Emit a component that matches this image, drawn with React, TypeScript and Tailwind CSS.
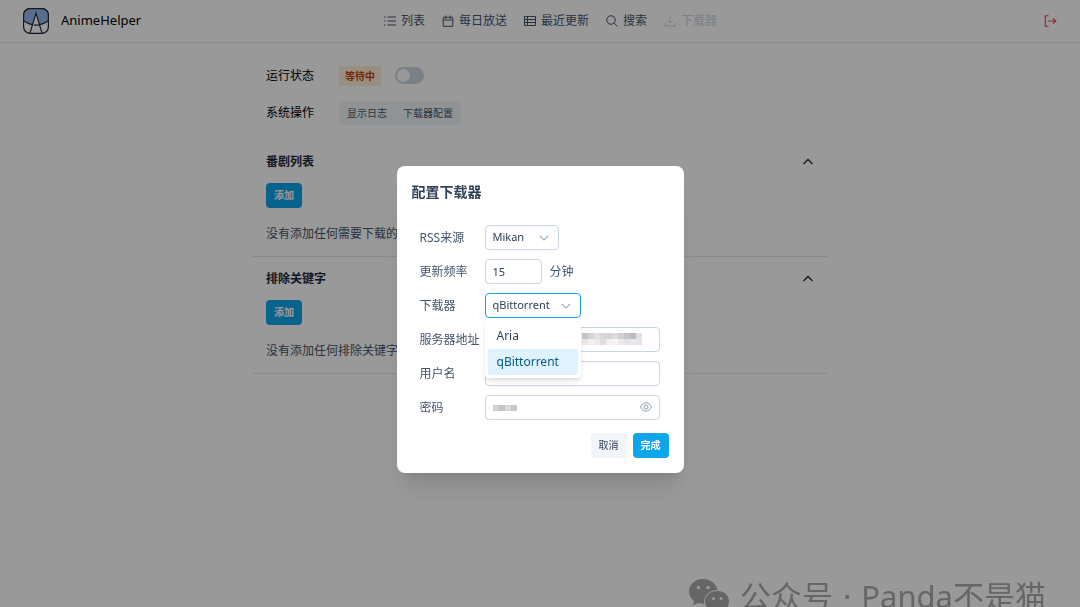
import { useState, type ReactNode } from "react"
import clsx from "clsx"

const IconBase = ({ children, className = "size-3" }: { children: ReactNode, className?: string }) => (
    <svg viewBox="0 0 24 24" fill="none" stroke="currentColor" strokeWidth="2" className={clsx("shrink-0", className)} aria-hidden="true">
        {children}
    </svg>
)

const ListIcon = () => (
    <IconBase>
        <path d="M7 4h17M7 12h17M7 20h17M0 4h3M0 12h3M0 20h3" />
    </IconBase>
)

const CalendarIcon = () => (
    <IconBase>
        <path d="M2.5 4.5h19v18h-19zM2.5 10h19M7.5 1v6.500M16.500 1v6.500" />
    </IconBase>
)

const TableIcon = () => (
    <IconBase>
        <path d="M1 3h22v18H1zM7 3v18M1 9h22M1 15h22" />
    </IconBase>
)

const SearchIcon = () => (
    <IconBase>
        <circle cx="10" cy="10" r="8.500" />
        <path d="M16.500 16.500l6.500 6.500" />
    </IconBase>
)

const DownloadIcon = () => (
    <IconBase>
        <path d="M12 1v15M6.500 10.500L12 16l5.500-5.500M1.500 15v7h21v-7" />
    </IconBase>
)

const LogoutIcon = () => (
    <IconBase className="size-3.5">
        <path d="M9.500 3H4v18h5.500M8.500 12H22M17 7.500l5 4.500-5 4.500" />
    </IconBase>
)

const ChevronIcon = ({ up = false, className }: { up?: boolean, className?: string }) => (
    <IconBase className={className}>
        <path d={up ? "M3 16l9-9 9 9" : "M2 7l10 10L22 7"} strokeWidth="2.500" />
    </IconBase>
)

const EyeIcon = () => (
    <IconBase>
        <path d="M1 12c5-11 17-11 22 0-5 11-17 11-22 0z" />
        <circle cx="12" cy="12" r="4" />
    </IconBase>
)

const Logo = () => (
    <svg viewBox="0 0 26 26" className="size-[26px]" fill="none" stroke="#1e293b" strokeWidth="1.200" aria-hidden="true">
        <rect x="0.600" y="0.600" width="24.800" height="24.800" rx="6.500" fill="#fff" />
        <path d="M0.600 12.500V7A6.400 6.400 0 0 1 7 0.600h12A6.400 6.400 0 0 1 25.400 7v5.500Q20 17 13 17T0.600 12.500z" fill="#93b8ea" />
        <path d="M7.500 25L13 5l5.500 20L16 17h-5z" fill="#fff" stroke="none" />
        <path d="M7 25.200L13 5l6 20.200M11 17h5" />
    </svg>
)

const navItems = [
    { label: "列表", icon: <ListIcon /> },
    { label: "每日放送", icon: <CalendarIcon /> },
    { label: "最近更新", icon: <TableIcon /> },
    { label: "搜索", icon: <SearchIcon /> },
    { label: "下载器", icon: <DownloadIcon />, current: true },
]

const Header = () => (
    <header className="flex h-[43px] items-center border-b border-slate-200 px-[23px]">
        <div className="flex w-[361px] shrink-0 items-center gap-3">
            <Logo />
            <span className="text-[13px] text-black">AnimeHelper</span>
        </div>
        <nav className="flex gap-[17px] text-xs text-slate-600">
            {navItems.map(item => (
                <a key={item.label} href="#" className={clsx("flex items-center gap-[5px]", item.current && "text-slate-300")}>
                    {item.icon}
                    {item.label}
                </a>
            ))}
        </nav>
        <button type="button" aria-label="退出" className="ml-auto text-[#ef4444]">
            <LogoutIcon />
        </button>
    </header>
)

const primaryButton = "h-[25px] w-9 rounded bg-[#0ea5e9] text-[10px] font-bold text-white"

const Section = ({ title, empty }: { title: string, empty: string }) => (
    <section className="border-b border-slate-200 px-3.5 py-3">
        <div className="flex h-5 items-center justify-between text-slate-800">
            <h2 className="text-xs font-bold">{title}</h2>
            <button type="button" aria-label="收起">
                <ChevronIcon up />
            </button>
        </div>
        <button type="button" className={clsx(primaryButton, "mt-[11px] block")}>添加</button>
        <p className="mt-4 text-xs leading-5 text-slate-600">{empty}</p>
    </section>
)

// masked value shown over a field
const Mask = ({ cells, className }: { cells: string[], className: string }) => (
    <span className={clsx("absolute grid", className)} aria-hidden="true">
        {cells.map((c, i) => <i key={i} className={clsx("size-1.5", c)} />)}
    </span>
)

const addressCells = [
    "bg-[#c4c4c6]", "bg-[#d4d4d6]", "bg-[#e2e2e4]", "bg-[#d8d8da]", "bg-[#d4d4d6]", "bg-[#dcdcde]", "bg-[#d0d0d2]", "bg-[#c4c4c8]", "bg-[#bcbcc0]", "bg-[#e2e2e4]",
    "bg-[#e8e8ea]", "bg-[#f2f2f2]", "bg-[#eaeaea]", "bg-[#dededf]", "bg-[#f0f0f0]", "bg-[#f4f4f4]", "bg-[#eaeaec]", "bg-[#e2e2e4]", "bg-[#eaeaec]", "bg-[#e6e6e8]",
]
const passwordCells = ["bg-[#d0d0d0]", "bg-[#c4c4c4]", "bg-[#d8d8d8]", "bg-[#c8c8c8]"]

const fieldBase = "h-[25px] rounded border bg-white px-[7px] text-[11px] text-slate-700 outline-none"
const field = `${fieldBase} border-slate-300`

const Row = ({ id, label, children }: { id: string, label: string, children: ReactNode }) => (
    <div className="flex items-center">
        <label htmlFor={id} className="w-[65px] shrink-0 text-xs">{label}</label>
        {children}
    </div>
)

const DownloaderModal = () => {
    const [downloader, setDownloader] = useState("qBittorrent")
    const [open, setOpen] = useState(true)

    return (
        <form role="dialog" aria-labelledby="title" className="w-[287px] rounded-lg bg-white px-[15px] pt-3.5 pb-[15px] text-slate-600 shadow-xl">
            <h1 id="title" className="text-sm leading-6 font-bold text-slate-700">配置下载器</h1>
            <div className="mt-[21px] flex flex-col gap-[9px] pr-[9px] pl-2">
                <Row id="rss" label="RSS来源">
                    <div className="relative">
                        <select id="rss" className={clsx(field, "block w-[74px] appearance-none")}>
                            <option>Mikan</option>
                        </select>
                        <ChevronIcon className="pointer-events-none absolute top-2 right-2.5 size-2.5 text-slate-400" />
                    </div>
                </Row>
                <Row id="interval" label="更新频率">
                    <input id="interval" defaultValue="15" className={clsx(field, "w-[57px]")} />
                    <span className="ml-2 text-xs">分钟</span>
                </Row>
                <Row id="downloader" label="下载器">
                    <div className="relative">
                        <select
                            id="downloader"
                            value={downloader}
                            onChange={e => setDownloader(e.target.value)}
                            className={clsx(fieldBase, "block w-24 appearance-none border-[#0ea5e9]")}
                        >
                            <option>Aria</option>
                            <option>qBittorrent</option>
                        </select>
                        <ChevronIcon className="pointer-events-none absolute top-2 right-2.5 size-2.5 text-slate-400" />
                        {open && (
                            <ul className="absolute top-full left-0 z-10 mt-0.5 w-24 rounded bg-white p-[3px] shadow-md">
                                {["Aria", "qBittorrent"].map(name => (
                                    <li key={name}>
                                        <button
                                            type="button"
                                            onClick={() => { setDownloader(name); setOpen(false) }}
                                            className={clsx(
                                                "block h-[26px] w-full rounded-xs px-[9px] text-left text-xs",
                                                name === downloader ? "bg-[#e0f2fe] text-[#075985]" : "text-slate-700"
                                            )}
                                        >
                                            {name}
                                        </button>
                                    </li>
                                ))}
                            </ul>
                        )}
                    </div>
                </Row>
                <Row id="host" label="服务器地址">
                    <div className="relative flex-1">
                        <input id="host" className={clsx(field, "block w-full")} />
                        <Mask cells={addressCells} className="top-1.5 right-[18px] grid-cols-10" />
                    </div>
                </Row>
                <Row id="user" label="用户名">
                    <input id="user" className={clsx(field, "min-w-0 flex-1")} />
                </Row>
                <Row id="password" label="密码">
                    <div className="relative flex-1">
                        <input id="password" type="password" className={clsx(field, "block w-full")} />
                        <Mask cells={passwordCells} className="top-2.5 left-2 grid-cols-4" />
                        <button type="button" aria-label="显示密码" className="absolute top-1.5 right-2 text-slate-400">
                            <EyeIcon />
                        </button>
                    </div>
                </Row>
            </div>
            <div className="mt-[13px] flex justify-end gap-1.5">
                <button type="button" className="h-[25px] w-9 rounded bg-slate-100 text-[10px] text-slate-700">取消</button>
                <button type="button" className={primaryButton}>完成</button>
            </div>
        </form>
    )
}

const Watermark = () => (
    <div className="pointer-events-none fixed right-[34px] -bottom-3 flex items-center gap-2.5 text-[31px] leading-[46px] whitespace-nowrap text-[#666]">
        <svg viewBox="0 0 42 36" className="h-9 w-[42px]" aria-hidden="true">
            <path d="M15 1C7 1 1 6.500 1 13.500c0 4 2 7 5 9.500L5 27.500l5-2.500c2 .6 3.500.8 6 .8C15.500 18 21 12 29.500 12 28 5 22 1 15 1z" fill="currentColor" />
            <path d="M29.500 13C22 13 17 18 17 23.500S22 34 29.500 34c1.500 0 3-.2 4.500-.7l4 2-1-3.500c2.500-2 4-4.700 4-8.300C41 18 36.500 13 29.500 13z" fill="currentColor" />
            <g fill="#999">
                <circle cx="10.500" cy="9.500" r="1.700" />
                <circle cx="20" cy="9.500" r="1.700" />
                <circle cx="25.500" cy="20.500" r="1.500" />
                <circle cx="33" cy="20.500" r="1.500" />
            </g>
        </svg>
        <span>公众号</span>
        <span>·</span>
        <span>Panda不是猫</span>
    </div>
)

export default function App() {
    const [running, setRunning] = useState(false)

    return (
        <div className="min-h-screen bg-white font-['Noto_Sans','Noto_Sans_CJK_SC',sans-serif]">
            <Header />
            <main className="mx-auto max-w-xl">
                <div className="flex flex-col gap-3 px-3.5 pt-5 pb-[15px] text-xs text-black">
                    <div className="flex h-[25px] items-center">
                        <span className="w-[73px]">运行状态</span>
                        <span className="rounded-xs bg-orange-100 px-1.5 text-[10px] leading-5 font-bold text-[#c2410c]">等待中</span>
                        <button
                            type="button"
                            role="switch"
                            aria-checked={running}
                            aria-label="运行状态"
                            onClick={() => setRunning(!running)}
                            className={clsx("ml-3.5 flex h-[17px] w-[29px] items-center rounded-full px-0.5", running ? "justify-end bg-[#0ea5e9]" : "bg-slate-300")}
                        >
                            <span className="size-[13px] rounded-full bg-white" />
                        </button>
                    </div>
                    <div className="flex h-[25px] items-center">
                        <span className="w-[73px]">系统操作</span>
                        <div className="flex rounded bg-slate-100 text-[10px] leading-6 text-slate-600">
                            <button type="button" className="px-2">显示日志</button>
                            <button type="button" className="px-2">下载器配置</button>
                        </div>
                    </div>
                </div>
                <Section title="番剧列表" empty="没有添加任何需要下载的番剧" />
                <Section title="排除关键字" empty="没有添加任何排除关键字，所有条目都会被下载" />
            </main>
            <div className="fixed inset-0 flex items-center justify-center bg-black/40 pt-8">
                <DownloaderModal />
            </div>
            <Watermark />
        </div>
    )
}
